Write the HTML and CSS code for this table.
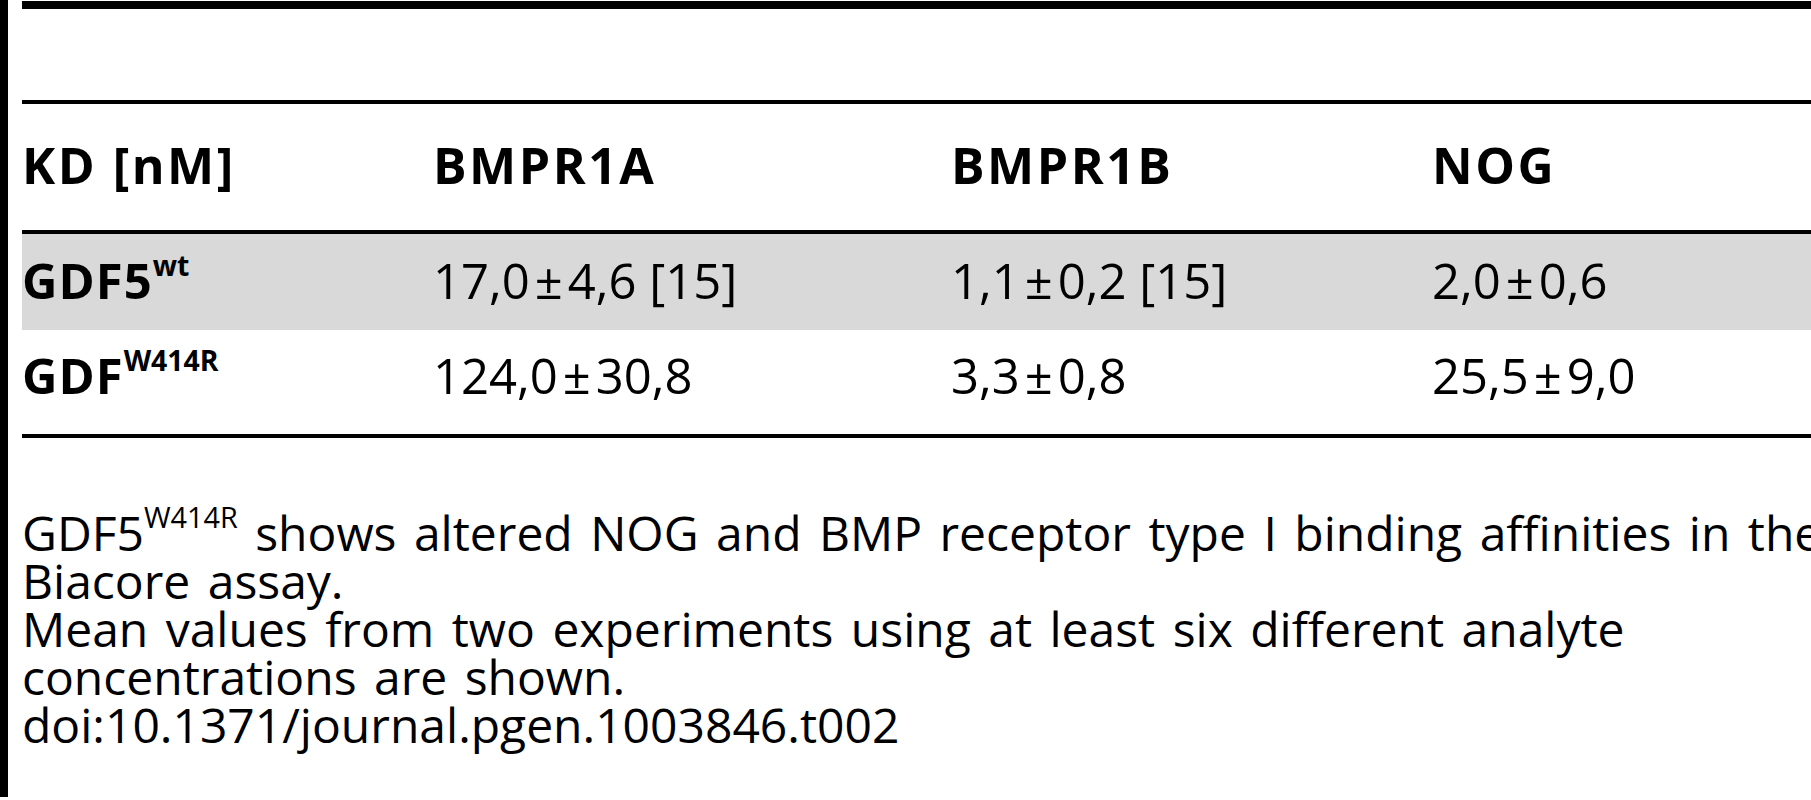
FILE: index.html
```html
<!DOCTYPE html>
<html lang="en">
<head>
<meta charset="utf-8">
<title>Table 2</title>
<link rel="stylesheet" href="styles.css">
</head>
<body>
<div class="page">
  <div class="bar"></div>
  <div class="content">
    <div class="caption"></div>
    <table class="data">
      <colgroup>
        <col class="c1"><col class="c2"><col class="c3"><col class="c4">
      </colgroup>
      <thead>
        <tr><th>KD [nM]</th><th>BMPR1A</th><th>BMPR1B</th><th>NOG</th></tr>
      </thead>
      <tbody>
        <tr class="shade"><th>GDF5<sup>wt</sup></th><td>17,0<span class="pm">±</span>4,6 [15]</td><td>1,1<span class="pm">±</span>0,2 [15]</td><td>2,0<span class="pm">±</span>0,6</td></tr>
        <tr class="last"><th>GDF<sup>W414R</sup></th><td>124,0<span class="pm">±</span>30,8</td><td>3,3<span class="pm">±</span>0,8</td><td>25,5<span class="pm">±</span>9,0</td></tr>
      </tbody>
    </table>
    <div class="notes">
      <p>GDF5<sup>W414R</sup> shows altered NOG and BMP receptor type I binding affinities in the<br>Biacore assay.</p>
      <p>Mean values from two experiments using at least six different analyte<br>concentrations are shown.</p>
      <p>doi:10.1371/journal.pgen.1003846.t002</p>
    </div>
  </div>
</div>
</body>
</html>
```

FILE: styles.css
```css
html, body {
  margin: 0;
  padding: 0;
  background: #ffffff;
}

.page {
  display: flex;
  width: 1811px;
  height: 800px;
  overflow: hidden;
}

.bar {
  flex: none;
  width: 8px;
  height: 797px;
  background: #000000;
}

.content {
  flex: none;
  width: 1900px;
  margin-left: 14px;
  padding-top: 1px;
  font-family: "Open Sans", "Noto Sans", sans-serif;
  color: #000000;
}

.caption {
  height: 91px;
  border-top: 8px solid #000000;
  border-bottom: 4px solid #000000;
}

.data {
  width: 1900px;
  table-layout: fixed;
  border-collapse: separate;
  border-spacing: 0;
  font-size: 49px;
  line-height: 59px;
}

.c1 { width: 411px; }
.c2 { width: 518px; }
.c3 { width: 481px; }

.data th,
.data td {
  padding: 0;
  text-align: left;
  vertical-align: top;
  white-space: nowrap;
}

.data th {
  font-weight: 700;
}

.data td {
  font-weight: 400;
}

.data thead th {
  font-size: 50px;
  padding-top: 32px;
  padding-bottom: 35px;
  letter-spacing: 2.5px;
  border-bottom: 4px solid #000000;
}

.data .shade th,
.data .shade td {
  background: #d9d9d9;
  padding-top: 17px;
  padding-bottom: 20px;
}

.data .last th,
.data .last td {
  padding-top: 16px;
  padding-bottom: 29px;
  border-bottom: 4px solid #000000;
}

.data tbody th {
  letter-spacing: 1px;
}

.data sup {
  font-size: 58%;
  line-height: 0;
  vertical-align: 0.8em;
  letter-spacing: 0;
}

.pm {
  margin: 0 5px;
}

.notes {
  margin-top: 71px;
  font-size: 48px;
  line-height: 48px;
  word-spacing: 5px;
  white-space: nowrap;
}

.notes p {
  margin: 0;
}

.notes sup {
  font-size: 60%;
  line-height: 0;
  vertical-align: 0.8em;
  word-spacing: 0;
}
```
